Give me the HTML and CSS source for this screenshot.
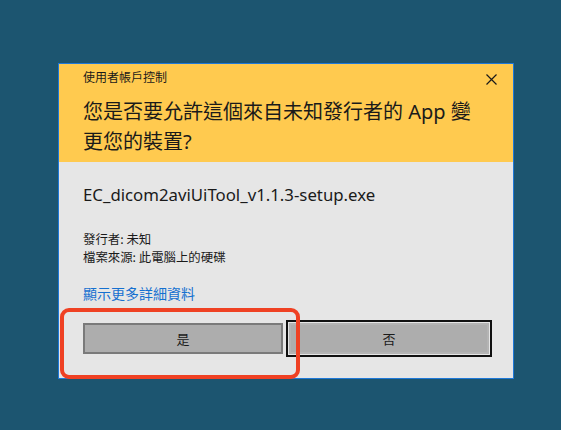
FILE: index.html
```html
<!DOCTYPE html>
<html lang="zh-Hant">
<head>
<meta charset="utf-8">
<title>使用者帳戶控制</title>
<link rel="stylesheet" href="styles.css">
</head>
<body>
<div class="dialog">
  <div class="header">
    <div class="topbar">
      <span class="caption">使用者帳戶控制</span>
      <svg class="close" width="11" height="11" viewBox="0 0 11 11"><path d="M0.5 0.5 L10.5 10.5 M10.5 0.5 L0.5 10.5" stroke="#1a1a1a" stroke-width="1.2" fill="none"/></svg>
    </div>
    <h1 class="question">您是否要允許這個來自未知發行者的 App 變<br>更您的裝置?</h1>
  </div>
  <div class="body">
    <div class="filename">EC_dicom2aviUiTool_v1.1.3-setup.exe</div>
    <div class="meta">
      <div class="meta-line">發行者: 未知</div>
      <div class="meta-line">檔案來源: 此電腦上的硬碟</div>
    </div>
    <a class="details" href="#">顯示更多詳細資料</a>
    <div class="buttons">
      <button class="btn btn-yes">是</button>
      <button class="btn btn-no">否</button>
    </div>
  </div>
  <div class="highlight"></div>
</div>
</body>
</html>
```
FILE: styles.css
```css
html, body {
  margin: 0;
  padding: 0;
}
body {
  background: #1c5570;
  width: 561px;
  height: 430px;
  overflow: hidden;
  font-family: "Noto Sans", "Noto Sans CJK TC", sans-serif;
  color: #1a1a1a;
}
.dialog {
  position: relative;
  box-sizing: border-box;
  width: 456px;
  margin: 63px 0 0 58px;
  border: 1px solid #1e78d8;
  background: #e6e6e6;
}
.header {
  background: #ffca4f;
  padding: 5px 16px 5px 24px;
}
.topbar {
  display: flex;
  justify-content: space-between;
  align-items: center;
  height: 16px;
}
.caption {
  font-family: "Noto Sans CJK TC", sans-serif;
  font-size: 12px;
  line-height: 16px;
}
.close {
  margin-top: 5px;
}
.question {
  margin: 12px 0 0 0;
  font-weight: normal;
  font-size: 20px;
  line-height: 30px;
  font-family: "Noto Sans", "Noto Sans CJK TC", sans-serif;
}
.body {
  padding: 21px 24px 24px 24px;
}
.filename {
  font-size: 16.8px;
  line-height: 24px;
}
.meta {
  margin-top: 23px;
  font-family: "Noto Sans CJK TC", sans-serif;
  font-size: 12.4px;
}
.meta-line {
  line-height: 18px;
  height: 18px;
}
.details {
  display: block;
  margin-top: 17px;
  font-family: "Noto Sans CJK TC", sans-serif;
  font-size: 14px;
  line-height: 20px;
  color: #1570d0;
  text-decoration: none;
}
.buttons {
  display: flex;
  gap: 6px;
  margin-top: 20px;
}
.btn {
  box-sizing: border-box;
  width: 200px;
  height: 31px;
  background: #adadad;
  font-family: "Noto Sans CJK TC", sans-serif;
  font-size: 13px;
  color: #1a1a1a;
  padding: 0;
}
.btn-yes {
  border: 2px solid #7a7a7a;
}
.btn-no {
  border: 2px solid #b4b4b4;
  outline: 2px solid #111;
  outline-offset: 1px;
}
.highlight {
  position: absolute;
  left: 1px;
  top: 244px;
  width: 240px;
  height: 71px;
  box-sizing: border-box;
  border: 4px solid #ef4123;
  border-radius: 9px;
  pointer-events: none;
}
```
